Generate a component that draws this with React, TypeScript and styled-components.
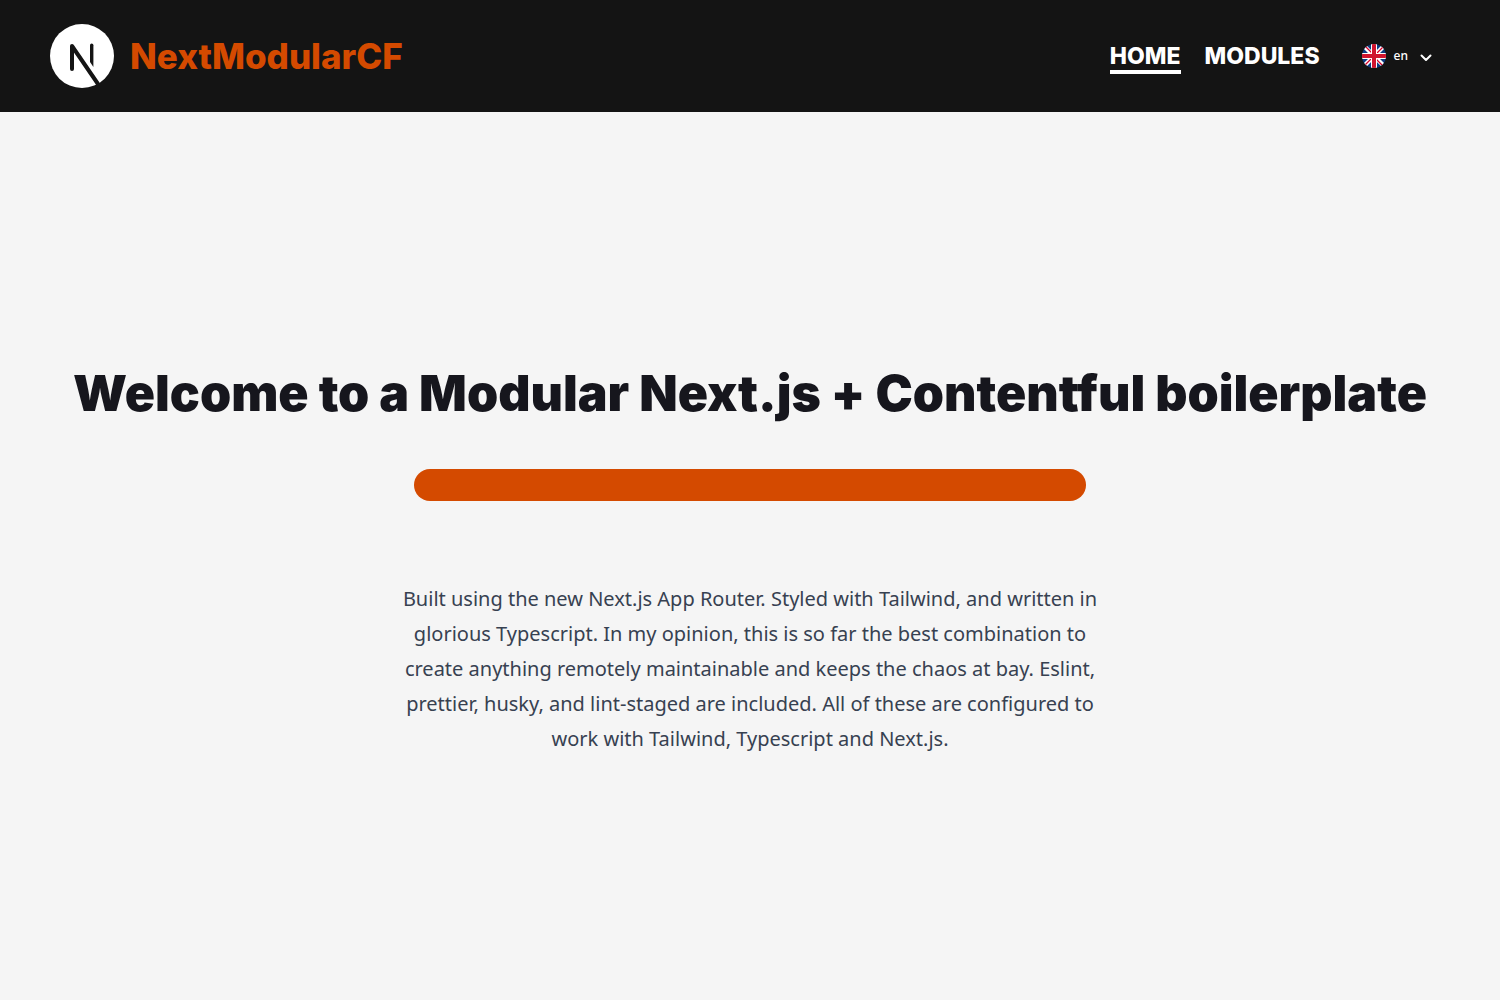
import React from "react";
import styled, { createGlobalStyle } from "styled-components";

const GlobalStyle = createGlobalStyle`
  *, *::before, *::after { box-sizing: border-box; }
  body {
    margin: 0;
    background: #f5f5f5;
    font-family: "Noto Sans", "Open Sans", sans-serif;
    font-variant-ligatures: none;
    -webkit-font-smoothing: antialiased;
  }
`;

const Page = styled.div`
  display: flex;
  flex-direction: column;
  min-height: 100vh;
`;

const Header = styled.header`
  display: flex;
  align-items: center;
  justify-content: space-between;
  padding: 24px 68px 24px 50px;
  background: #141414;
`;

const Brand = styled.a`
  display: flex;
  align-items: center;
  gap: 16px;
  color: #d44a00;
  font-family: Inter, sans-serif;
  font-size: 35px;
  font-weight: 800;
  line-height: 40px;
  text-decoration: none;
`;

const Actions = styled.div`
  display: flex;
  align-items: center;
  gap: 42px;
`;

const Nav = styled.nav`
  display: flex;
  gap: 24px;
`;

const NavLink = styled.a<{ $active?: boolean }>`
  padding-top: 4px;
  border-bottom: 4px solid ${(p) => (p.$active ? "#fff" : "transparent")};
  color: #fff;
  font-family: Inter, sans-serif;
  font-size: 23px;
  font-weight: 800;
  line-height: 28px;
  text-decoration: none;
  text-transform: uppercase;
`;

const LanguageButton = styled.button`
  display: flex;
  align-items: center;
  gap: 8px;
  padding: 0;
  border: 0;
  background: none;
  color: #fff;
  font-family: "Noto Sans", sans-serif;
  font-size: 12px;
  font-weight: 500;
  line-height: 24px;
  cursor: pointer;
`;

const Chevron = styled.svg`
  margin: 4px 0 0 4px;
`;

const Hero = styled.main`
  display: flex;
  flex: 1;
  flex-direction: column;
  align-items: center;
  justify-content: center;
  padding: 48px 24px;
  text-align: center;
`;

const Title = styled.h1`
  margin: 0;
  color: #16161d;
  font-family: Inter, sans-serif;
  font-size: 50px;
  font-weight: 900;
  line-height: 72px;
`;

const Divider = styled.div`
  width: 100%;
  max-width: 672px;
  height: 32px;
  margin: 40px 0 80px;
  border-radius: 16px;
  background: #d44a00;
`;

const Intro = styled.p`
  max-width: 720px;
  margin: 0;
  color: #374151;
  font-size: 20px;
  line-height: 35px;
`;

function Logo() {
  return (
    <svg width="64" height="64" viewBox="0 0 64 64" aria-hidden="true">
      <circle cx="32" cy="32" r="32" fill="#fff" />
      <path d="M22 45V22L48 60" fill="none" stroke="#141414" strokeWidth="4" strokeLinecap="round" strokeLinejoin="round" />
      <path d="M40 21.2Q40 19.5 41.7 19.5Q43.4 19.5 43.4 21.2V43L40 38Z" fill="#141414" />
    </svg>
  );
}

function BritishFlag() {
  return (
    <svg width="24" height="24" viewBox="0 0 24 24" aria-hidden="true">
      <clipPath id="flag-circle">
        <circle cx="12" cy="12" r="12" />
      </clipPath>
      <g clipPath="url(#flag-circle)">
        <path d="M0 0H24V24H0Z" fill="#0b3b82" />
        <path d="M0 0L24 24M24 0L0 24" stroke="#fff" strokeWidth="4.4" />
        <path d="M3 2L10 9M21 3L14 10M3 21L10 14M14 15L21 22" stroke="#d80027" strokeWidth="1.3" />
        <path d="M12 0V24M0 12H24" stroke="#fff" strokeWidth="6" />
        <path d="M12 0V24M0 12H24" stroke="#d0152f" strokeWidth="4" />
      </g>
    </svg>
  );
}

export default function App() {
  return (
    <>
      <GlobalStyle />
      <Page>
        <Header>
          <Brand href="#home">
            <Logo />
            NextModularCF
          </Brand>
          <Actions>
            <Nav aria-label="Main">
              <NavLink href="#home" $active aria-current="page">Home</NavLink>
              <NavLink href="#modules">Modules</NavLink>
            </Nav>
            <LanguageButton type="button" aria-haspopup="listbox">
              <BritishFlag />
              en
              <Chevron width="12" height="8" viewBox="0 0 12 8" aria-hidden="true">
                <path d="M1.5 1.5L6 6L10.5 1.5" fill="none" stroke="#fff" strokeWidth="2" strokeLinecap="round" strokeLinejoin="round" />
              </Chevron>
            </LanguageButton>
          </Actions>
        </Header>
        <Hero>
          <Title>Welcome to a Modular Next.js + Contentful boilerplate</Title>
          <Divider />
          <Intro>
            Built using the new Next.js App Router. Styled with Tailwind, and written in glorious
            Typescript. In my opinion, this is so far the best combination to create anything
            remotely maintainable and keeps the chaos at bay. Eslint, prettier, husky, and
            lint-staged are included. All of these are configured to work with Tailwind,
            Typescript and Next.js.
          </Intro>
        </Hero>
      </Page>
    </>
  );
}
